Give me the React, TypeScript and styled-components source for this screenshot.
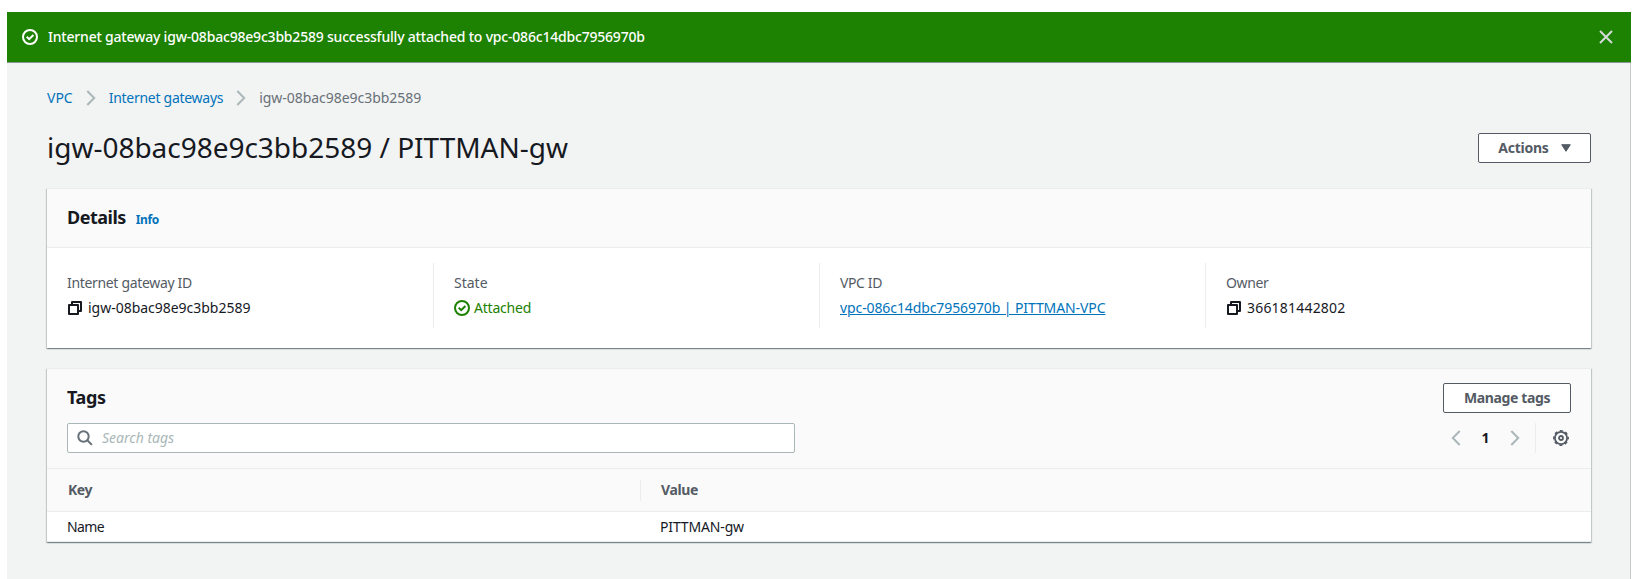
import React from 'react';
import styled, { createGlobalStyle } from 'styled-components';

const colors = {
  ink: '#16191f',
  text: '#545b64',
  muted: '#687078',
  link: '#0073bb',
  success: '#1d8102',
  line: '#eaeded',
  inputLine: '#aab7b8',
  page: '#f2f3f3',
  header: '#fafafa',
};

const GlobalStyle = createGlobalStyle`
  *, *::before, *::after { box-sizing: border-box; }
  body {
    margin: 0;
    background: #fff;
    color: ${colors.ink};
    font-family: 'Noto Sans', 'Liberation Sans', sans-serif;
    font-size: 14px;
    line-height: 22px;
    overflow: hidden;
  }
  svg { display: block; flex: none; }
  button { font: inherit; background: none; border: 0; padding: 0; margin: 0; cursor: pointer; }
  h1, h2, dl, dt, dd, ol { margin: 0; padding: 0; }
`;

const Page = styled.div`
  display: flex;
  flex-direction: column;
  height: 579px;
  padding: 12px 6px 0 7px;
`;

const Flash = styled.div`
  display: flex;
  align-items: center;
  height: 51px;
  padding: 0 17px 0 15px;
  background: ${colors.success};
  border-bottom: 1px solid #879596;
  color: #fff;
`;

const FlashText = styled.div`
  flex: 1;
  margin-left: 10px;
  font-weight: 500;
  letter-spacing: -0.2px;
`;

const CloseButton = styled.button`
  color: #d5dbdb;
`;

const Content = styled.main`
  flex: 1;
  padding: 24px 39px 0 40px;
  background: ${colors.page};
  border-right: 1px solid #c6cccd;
`;

const Breadcrumbs = styled.ol`
  display: flex;
  align-items: center;
  height: 22px;
  list-style: none;
`;

const Crumb = styled.li<{ $current?: boolean; $track?: number }>`
  color: ${(p) => (p.$current ? colors.muted : colors.link)};
  letter-spacing: ${(p) => p.$track ?? 0}px;
  white-space: nowrap;
`;

const CrumbArrow = styled.li`
  width: 36px;
  padding: 0 0 0 13px;
  color: ${colors.inputLine};
`;

const TitleRow = styled.div`
  display: flex;
  align-items: center;
  justify-content: space-between;
  height: 36px;
  margin: 21px 0 22px;
`;

const Title = styled.h1`
  padding-bottom: 3px;
  font-size: 28px;
  font-weight: 400;
  line-height: 36px;
  letter-spacing: -0.02px;
`;

const Button = styled.button<{ $width: number; $track?: number }>`
  display: flex;
  align-items: center;
  justify-content: center;
  gap: 12px;
  width: ${(p) => p.$width}px;
  height: 30px;
  border: 1px solid ${colors.text};
  border-radius: 2px;
  background: #fff;
  color: ${colors.text};
  font-weight: 700;
  letter-spacing: ${(p) => p.$track ?? 0}px;
`;

const Card = styled.section`
  margin-bottom: 20px;
  background: #fff;
  border-top: 1px solid ${colors.line};
  box-shadow: 0 1px 1px 0 rgba(0, 28, 36, 0.3), 1px 1px 1px 0 rgba(0, 28, 36, 0.15),
    -1px 1px 1px 0 rgba(0, 28, 36, 0.15);
`;

const CardHeader = styled.header<{ $height: number }>`
  height: ${(p) => p.$height}px;
  padding: 14px 20px 0;
  background: ${colors.header};
  border-bottom: 1px solid ${colors.line};
`;

const HeadingRow = styled.div`
  display: flex;
  align-items: center;
  height: 30px;
`;

const Heading = styled.h2<{ $track: number }>`
  padding-bottom: 2px;
  font-size: 18px;
  font-weight: 700;
  line-height: 22px;
  letter-spacing: ${(p) => p.$track}px;
`;

const Spacer = styled.div`
  flex: 1;
`;

const InfoLink = styled.a`
  margin: 3px 0 0 10px;
  color: ${colors.link};
  font-size: 12px;
  font-weight: 700;
  line-height: 20px;
  letter-spacing: -0.4px;
`;

const Fields = styled.dl`
  display: grid;
  grid-template-columns: repeat(4, 1fr);
  height: 100px;
  padding: 15px 0 20px;
`;

const Field = styled.div`
  padding: 9px 20px 0;
  & + & { border-left: 1px solid ${colors.line}; }
`;

const Label = styled.dt<{ $track: number }>`
  color: ${colors.text};
  letter-spacing: ${(p) => p.$track}px;
`;

const Value = styled.dd<{ $track: number; $success?: boolean; $gap?: number }>`
  display: flex;
  align-items: center;
  gap: ${(p) => p.$gap ?? 0}px;
  height: 22px;
  margin-top: 3px;
  color: ${(p) => (p.$success ? colors.success : colors.ink)};
  letter-spacing: ${(p) => p.$track}px;
`;

const ValueLink = styled.a`
  color: ${colors.link};
  text-decoration: underline;
  text-underline-offset: 1px;
  text-decoration-thickness: 1px;
`;

const Toolbar = styled.div`
  display: flex;
  justify-content: space-between;
  margin-top: 10px;
`;

const SearchBox = styled.label`
  display: flex;
  align-items: center;
  gap: 9px;
  width: 728px;
  height: 30px;
  padding-left: 9px;
  background: #fff;
  border: 1px solid ${colors.inputLine};
  border-radius: 2px;
  color: ${colors.muted};
`;

const SearchInput = styled.input`
  flex: 1;
  border: 0;
  padding: 0;
  outline: 0;
  background: none;
  font: inherit;
  &::placeholder { color: ${colors.inputLine}; font-style: italic; opacity: 1; }
`;

const Pager = styled.div`
  display: flex;
  align-items: center;
  height: 30px;
  color: ${colors.inputLine};
`;

const PageNumber = styled.span`
  width: 49px;
  text-align: center;
  color: ${colors.ink};
  font-weight: 700;
`;

const Settings = styled.button`
  display: flex;
  align-items: center;
  justify-content: flex-end;
  width: 36px;
  height: 30px;
  margin-left: 15px;
  padding-right: 2px;
  border-left: 1px solid ${colors.line};
  color: ${colors.text};
`;

const HeadRow = styled.div`
  display: grid;
  grid-template-columns: 593px 1fr;
  align-items: center;
  height: 43px;
  background: ${colors.header};
  border-bottom: 1px solid ${colors.line};
`;

const HeadCell = styled.div<{ $track: number }>`
  height: 21px;
  padding-left: 21px;
  color: ${colors.text};
  font-weight: 700;
  line-height: 19px;
  letter-spacing: ${(p) => p.$track}px;
  & + & { border-left: 1px solid ${colors.line}; padding-left: 20px; }
`;

const BodyRow = styled.div`
  display: grid;
  grid-template-columns: 593px 1fr;
  align-items: center;
  height: 30px;
  border-bottom: 1px solid ${colors.line};
`;

const BodyCell = styled.div<{ $track: number }>`
  padding-left: 20px;
  letter-spacing: ${(p) => p.$track}px;
`;

const CheckIcon = () => (
  <svg width="16" height="16" viewBox="0 0 16 16" fill="none" stroke="currentColor" strokeWidth="2">
    <circle cx="8" cy="8" r="7" />
    <path d="M4.7 7.8 7.2 10.2 11.4 6" />
  </svg>
);

const CopyIcon = () => (
  <svg width="16" height="16" viewBox="0 0 16 16" fill="none" stroke="currentColor" strokeWidth="2" strokeLinejoin="round">
    <path d="M2 5h9v9H2z" />
    <path d="M5 5V2h9v9h-3" />
  </svg>
);

const Chevron = ({ left }: { left?: boolean }) => (
  <svg width="10" height="16" viewBox="0 0 10 16" fill="none" stroke="currentColor" strokeWidth="2">
    <path d={left ? 'M8.7 1 1.8 8l6.9 7' : 'M1.3 1 8.2 8l-6.9 7'} />
  </svg>
);

const CloseIcon = () => (
  <svg width="16" height="16" viewBox="0 0 16 16" fill="none" stroke="currentColor" strokeWidth="2">
    <path d="M2 2l12 12M14 2 2 14" />
  </svg>
);

const CaretIcon = () => (
  <svg width="10" height="8" viewBox="0 0 10 8" fill="currentColor" stroke="currentColor" strokeLinejoin="round">
    <path d="M.7.7h8.6L5 7.3z" />
  </svg>
);

const SearchIcon = () => (
  <svg width="16" height="16" viewBox="0 0 16 16" fill="none" stroke="currentColor" strokeWidth="2">
    <circle cx="6.5" cy="6.5" r="5.2" />
    <path d="m10.3 10.3 4.6 4.6" />
  </svg>
);

const GearIcon = () => (
  <svg width="16" height="16" viewBox="0 0 16 16" fill="none" stroke="currentColor">
    <circle cx="8" cy="8" r="6.1" strokeWidth="1.8" />
    <circle cx="8" cy="8" r="7.2" strokeWidth="1.5" strokeDasharray="3 2.655" strokeDashoffset="1.5" />
    <circle cx="8" cy="8" r="2" strokeWidth="1.8" />
  </svg>
);

export default function App() {
  return (
    <Page>
      <GlobalStyle />
      <Flash role="status">
        <CheckIcon />
        <FlashText>Internet gateway igw-08bac98e9c3bb2589 successfully attached to vpc-086c14dbc7956970b</FlashText>
        <CloseButton aria-label="Dismiss">
          <CloseIcon />
        </CloseButton>
      </Flash>
      <Content>
        <Breadcrumbs>
          <Crumb>VPC</Crumb>
          <CrumbArrow><Chevron /></CrumbArrow>
          <Crumb $track={-0.28}>Internet gateways</Crumb>
          <CrumbArrow><Chevron /></CrumbArrow>
          <Crumb $current $track={-0.04}>igw-08bac98e9c3bb2589</Crumb>
        </Breadcrumbs>
        <TitleRow>
          <Title>igw-08bac98e9c3bb2589 / PITTMAN-gw</Title>
          <Button $width={113} $track={-0.25}>
            Actions
            <CaretIcon />
          </Button>
        </TitleRow>

        <Card>
          <CardHeader $height={59}>
            <HeadingRow>
              <Heading $track={-0.5}>Details</Heading>
              <InfoLink>Info</InfoLink>
            </HeadingRow>
          </CardHeader>
          <Fields>
            <Field>
              <Label $track={-0.33}>Internet gateway ID</Label>
              <Value $track={-0.02} $gap={5}><CopyIcon />igw-08bac98e9c3bb2589</Value>
            </Field>
            <Field>
              <Label $track={0}>State</Label>
              <Value $track={-0.22} $gap={4} $success><CheckIcon />Attached</Value>
            </Field>
            <Field>
              <Label $track={-0.38}>VPC ID</Label>
              <Value $track={-0.1}><ValueLink>vpc-086c14dbc7956970b | PITTMAN-VPC</ValueLink></Value>
            </Field>
            <Field>
              <Label $track={-0.4}>Owner</Label>
              <Value $track={0.2} $gap={5}><CopyIcon />366181442802</Value>
            </Field>
          </Fields>
        </Card>

        <Card>
          <CardHeader $height={100}>
            <HeadingRow>
              <Heading $track={-0.4}>Tags</Heading>
              <Spacer />
              <Button $width={128} $track={-0.38}>Manage tags</Button>
            </HeadingRow>
            <Toolbar>
              <SearchBox>
                <SearchIcon />
                <SearchInput placeholder="Search tags" />
              </SearchBox>
              <Pager>
                <Chevron left />
                <PageNumber>1</PageNumber>
                <Chevron />
                <Settings aria-label="Preferences"><GearIcon /></Settings>
              </Pager>
            </Toolbar>
          </CardHeader>
          <HeadRow>
            <HeadCell $track={-0.45}>Key</HeadCell>
            <HeadCell $track={-0.37}>Value</HeadCell>
          </HeadRow>
          <BodyRow>
            <BodyCell $track={-0.6}>Name</BodyCell>
            <BodyCell $track={-0.15}>PITTMAN-gw</BodyCell>
          </BodyRow>
        </Card>
      </Content>
    </Page>
  );
}
